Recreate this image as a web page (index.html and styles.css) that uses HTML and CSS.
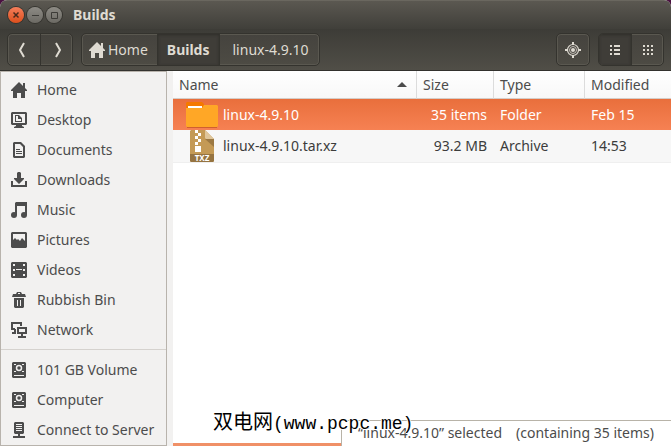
FILE: index.html
```html
<!DOCTYPE html>
<html lang="en">
<head>
    <meta charset="UTF-8">
    <meta name="viewport" content="width=device-width, initial-scale=1.0">
    <title>Builds</title>
    <link rel="stylesheet" href="styles.css">
</head>
<body>
    <div class="window">
        <header class="titlebar">
            <button class="win-btn close" aria-label="Close">
                <svg width="16" height="16" viewBox="0 0 16 16"><path d="M5.5 5.5l5 5M10.5 5.5l-5 5" stroke="#4a2a1c" stroke-width="1.5"/></svg>
            </button>
            <button class="win-btn" aria-label="Minimize">
                <svg width="16" height="16" viewBox="0 0 16 16"><path d="M5 8.5h7" stroke="#3c3b37"/></svg>
            </button>
            <button class="win-btn" aria-label="Maximize">
                <svg width="16" height="16" viewBox="0 0 16 16"><path d="M5.500 5.500h6v6h-6z" fill="none" stroke="#3c3b37"/></svg>
            </button>
            <h1>Builds</h1>
        </header>

        <nav class="toolbar">
            <div class="group">
                <button class="tool" aria-label="Back">
                    <svg width="16" height="16" viewBox="0 0 16 16"><path d="M8 1L4 8l4 7" fill="none" stroke="#dfdbd2" stroke-width="2"/></svg>
                </button>
                <button class="tool" aria-label="Forward">
                    <svg width="16" height="16" viewBox="0 0 16 16"><path d="M7 1l4 7-4 7" fill="none" stroke="#dfdbd2" stroke-width="2"/></svg>
                </button>
            </div>
            <div class="group path">
                <button class="tool home">
                    <svg width="16" height="16" viewBox="0 0 16 16" fill="#dfdbd2"><path d="M8 0L0 8v1h2v7h4v-5h4v5h4V9h2V8l-2-2V1h-2v3z"/></svg>
                    Home
                </button>
                <button class="tool active current">Builds</button>
                <button class="tool">linux-4.9.10</button>
            </div>
            <div class="group right">
                <button class="tool" aria-label="Location">
                    <svg width="16" height="16" viewBox="0 0 16 16" fill="none" stroke="#dfdbd2"><circle cx="8" cy="8" r="5.500" stroke-width="1.200"/><circle cx="8" cy="8" r="3.500" stroke-width=".8"/><circle cx="8" cy="8" r="2" fill="#dfdbd2" stroke="none"/><path d="M8 0v3M8 13v3M0 8h3M13 8h3" stroke-width="2"/></svg>
                </button>
            </div>
            <div class="group">
                <button class="tool active" aria-label="List view">
                    <svg width="16" height="16" viewBox="0 0 16 16" fill="#dfdbd2"><path d="M3 3h2v2H3zM3 7h2v2H3zM3 11h2v2H3zM7 3h6v2H7zM7 7h6v2H7zM7 11h6v2H7z"/></svg>
                </button>
                <button class="tool" aria-label="Grid view">
                    <svg width="16" height="16" viewBox="0 0 16 16" fill="#dfdbd2"><path d="M3 3h2v2H3zM3 7h2v2H3zM3 11h2v2H3zM7 3h2v2H7zM7 7h2v2H7zM7 11h2v2H7zM11 3h2v2h-2zM11 7h2v2h-2zM11 11h2v2h-2z"/></svg>
                </button>
            </div>
        </nav>

        <div class="content">
            <!-- Places sidebar -->
            <aside class="sidebar">
                <ul>
                    <li><a href="#">
                        <svg width="16" height="16" viewBox="0 0 16 16"><path d="M8 0L0 8v1h2v7h4v-5h4v5h4V9h2V8l-2-2V1h-2v3z"/></svg>
                        Home</a></li>
                    <li><a href="#">
                        <svg width="16" height="16" viewBox="0 0 16 16"><path fill-rule="evenodd" d="M1 0h14l1 1v11l-1 1h-4v1l2 1v1H3v-1l2-1v-1H1l-1-1V1zM2 2v9h12V2zM4 3h4l3 3v4H4zM5 4v5h5V7H7V4z"/></svg>
                        Desktop</a></li>
                    <li><a href="#">
                        <svg width="16" height="16" viewBox="0 0 16 16"><path fill-rule="evenodd" d="M3 0h7l4 4v11l-1 1H3l-1-1V1zM4 2v12h8V5L9 2zM5 7h4v1H5zM5 9h6v1H5zM5 11h6v1H5z"/></svg>
                        Documents</a></li>
                    <li><a href="#">
                        <svg width="16" height="16" viewBox="0 0 16 16"><path d="M6 1l1-1h2l1 1v5h3v1l-5 5-5-5V6h3zM0 9h2v4h12V9h2v6H0z"/></svg>
                        Downloads</a></li>
                    <li><a href="#">
                        <svg width="16" height="16" viewBox="0 0 16 16"><path d="M4 1l1-1h11v13h-2V4H6v9H4z"/><circle cx="3" cy="13" r="3"/><circle cx="13" cy="13" r="3"/></svg>
                        Music</a></li>
                    <li><a href="#">
                        <svg width="16" height="16" viewBox="0 0 16 16"><path fill-rule="evenodd" d="M1 0h14l1 1v14l-1 1H1l-1-1V1zM2 2v6l2-2 2 2 1-1 2 2 2-3 3 3V2z"/></svg>
                        Pictures</a></li>
                    <li><a href="#">
                        <svg width="16" height="16" viewBox="0 0 16 16"><path fill-rule="evenodd" d="M1 0h14l1 1v14l-1 1H1l-1-1V1zM2 2v2h2V2zM2 7v2h2V7zM2 12v2h2v-2zM12 2v2h2V2zM12 7v2h2V7zM12 12v2h2v-2zM5 7v1h6V7z"/></svg>
                        Videos</a></li>
                    <li><a href="#">
                        <svg width="16" height="16" viewBox="0 0 16 16"><path fill-rule="evenodd" d="M5 2l1-2h4l1 2h3l1 3H1l1-3zM7 1v1h2V1zM3 6h10v9l-1 1H4l-1-1zM6 8v6h1V8zM9 8v6h1V8z"/></svg>
                        Rubbish Bin</a></li>
                    <li><a href="#">
                        <svg class="outline" width="16" height="16" viewBox="0 0 16 16"><path d="M10 4V1H1v6h3M5 11H1M4 7v4M7 6h8v5H7zM11 11v4M7 15h8"/></svg>
                        Network</a></li>
                </ul>
                <ul class="devices">
                    <li><a href="#">
                        <svg width="16" height="16" viewBox="0 0 16 16"><path fill-rule="evenodd" d="M2 0h12l1 1v14l-1 1H2l-1-1V1zM3 13v1h10v-1z"/><circle cx="8" cy="6" r="2.500" fill="none" stroke="#f2f1f0" stroke-width="1.500"/><path d="M3 2h2v1H3zM11 2h2v1h-2zM3 9h2v1H3zM11 9h2v1h-2z" fill="#f2f1f0"/></svg>
                        101 GB Volume</a></li>
                    <li><a href="#">
                        <svg width="16" height="16" viewBox="0 0 16 16"><path fill-rule="evenodd" d="M2 0h12l1 1v14l-1 1H2l-1-1V1zM3 13v1h10v-1z"/><circle cx="8" cy="6" r="2.500" fill="none" stroke="#f2f1f0" stroke-width="1.500"/><path d="M3 2h2v1H3zM11 2h2v1h-2zM3 9h2v1H3zM11 9h2v1h-2z" fill="#f2f1f0"/></svg>
                        Computer</a></li>
                    <li><a href="#">
                        <svg width="16" height="16" viewBox="0 0 16 16"><path fill-rule="evenodd" d="M4 0h8l1 1v10l-1 1H9v2h5v2H2v-2h5v-2H4l-1-1V1zM5 2v1h6V2zM5 4v1h6V4zM5 6v1h6V6zM5 8v1h6V8z"/></svg>
                        Connect to Server</a></li>
                </ul>
            </aside>

            <!-- File list -->
            <main class="files">
                <table>
                    <thead>
                        <tr>
                            <th><div class="sorted">Name <svg width="10" height="5" viewBox="0 0 10 5"><path d="M0 5L5 0l5 5z"/></svg></div></th>
                            <th class="size">Size</th>
                            <th class="type">Type</th>
                            <th class="modified">Modified</th>
                        </tr>
                    </thead>
                    <tbody>
                        <tr class="selected">
                            <td><div class="file">
                                <svg width="32" height="27" viewBox="0 0 32 27"><path d="M1 1h15l2 2v7H0V2z" fill="#f57900"/><path d="M2 5h14v3H2z" fill="#fff"/><path d="M0 7h16l2-3h13l1 1v20l-1 1H1l-1-1z" fill="#ffa726"/><path d="M1 26h30v1H1z" fill="#d0602f"/></svg>
                                linux-4.9.10</div></td>
                            <td class="num">35 items</td>
                            <td>Folder</td>
                            <td>Feb 15</td>
                        </tr>
                        <tr class="odd">
                            <td><div class="file">
                                <svg width="32" height="32" viewBox="0 0 32 32"><path d="M5 0h14l9 9v22l-1 1H5l-1-1V1z" fill="#c49a56"/><path d="M19 9l9 8V9z" fill="#9c7943"/><path d="M19 0l9 9h-8l-1-1z" fill="#dfc69b"/><path d="M4 24h24v7l-1 1H5l-1-1z" fill="#967441"/><path d="M9 0h3v3H9zM12 3h3v3h-3zM9 6h3v3H9zM12 9h3v3h-3zM9 12h3v3H9zM9 16h6v6H9z" fill="#fff"/><text x="16" y="31" class="ext">TXZ</text></svg>
                                linux-4.9.10.tar.xz</div></td>
                            <td class="num">93.2 MB</td>
                            <td>Archive</td>
                            <td>14:53</td>
                        </tr>
                    </tbody>
                </table>
                <div class="progress"></div>
                <div class="status"><span>“linux-4.9.10” selected</span><span>(containing 35 items)</span></div>
                <div class="watermark"><span>双电网</span>(www.pcpc.me)</div>
            </main>
        </div>
    </div>
</body>
</html>
```

FILE: styles.css
```css
* {
    box-sizing: border-box;
}
body {
    margin: 0;
    background-color: #4a1140;
    color: #4c4c4c;
    font-family: "Noto Sans", "Open Sans", sans-serif;
    font-size: 14px;
    line-height: 20px;
}
button {
    font: inherit;
    color: inherit;
    padding: 0;
    border: none;
    background: none;
}
svg {
    display: block;
    flex: none;
}
.window {
    display: flex;
    flex-direction: column;
    height: 100vh;
    overflow: hidden;
    border-radius: 7px 7px 0 0;
    background-color: #f2f1f0;
}

/* Title bar */
.titlebar {
    display: flex;
    align-items: center;
    gap: 3px;
    height: 29px;
    padding: 0 8px;
    background: linear-gradient(#5b5851, #403f3a);
    border-top: 1px solid #6a675f;
}
.titlebar h1 {
    margin: 0 0 0 8px;
    font-size: 14px;
    color: #dfdbd2;
}
.win-btn {
    width: 16px;
    height: 16px;
    border-radius: 50%;
    background: linear-gradient(#8d8b85, #6c6a64);
    box-shadow: 0 0 0 1px #35342f;
}
.win-btn.close {
    background: linear-gradient(#f57e5b, #dd4f1c);
}

/* Toolbar */
.toolbar {
    display: flex;
    gap: 8px;
    height: 42px;
    padding: 4px 7px;
    background: linear-gradient(#3d3c37, #504e47);
    border-bottom: 1px solid #33322e;
    color: #dfdbd2;
}
.group {
    display: flex;
    height: 33px;
    border: 1px solid #34332e;
    border-radius: 5px;
    box-shadow: inset 0 0 0 1px #5a5850;
    background: linear-gradient(#45433e, #4d4b44);
    overflow: hidden;
}
.tool {
    display: flex;
    align-items: center;
    justify-content: center;
    gap: 3px;
    min-width: 32px;
}
.tool + .tool {
    border-left: 1px solid #34332e;
}
.tool.active {
    background-color: #3f3d38;
    box-shadow: inset 0 1px 3px #2f2e2a;
}
.path .tool {
    padding: 0 11px 0 13px;
}
.path .home {
    padding: 0 9px 0 7px;
}
.path .current {
    padding: 0 9px;
    font-weight: bold;
}
.right {
    margin-left: auto;
}

/* Sidebar */
.content {
    display: flex;
    flex: 1;
    min-height: 0;
}
.sidebar {
    width: 167px;
    margin-right: 6px;
    padding-top: 3px;
    border: 1px solid #b8b3ac;
    overflow: hidden;
    flex: none;
}
.sidebar ul {
    margin: 0;
    padding: 0;
    list-style: none;
}
.sidebar .devices {
    margin-top: 4px;
    padding-top: 5px;
    border-top: 1px solid #d5d2ce;
}
.sidebar a {
    display: flex;
    align-items: center;
    gap: 10px;
    height: 30px;
    padding-left: 10px;
    color: #4c4c4c;
    white-space: nowrap;
    text-decoration: none;
}
.sidebar svg {
    fill: #4c4c4c;
}
.sidebar .outline {
    fill: none;
    stroke: #4c4c4c;
    stroke-width: 2;
}

/* File list */
.files {
    position: relative;
    flex: 1;
    min-width: 0;
    background-color: #fff;
}
table {
    width: 100%;
    border-collapse: separate;
    border-spacing: 0;
    table-layout: fixed;
}
th {
    height: 28px;
    padding: 0 6px;
    font-weight: normal;
    text-align: left;
    background: linear-gradient(#fff, #f8f8f8);
    border-bottom: 1px solid #d5cdc8;
}
th + th {
    border-left: 1px solid #dcdcdc;
}
.sorted {
    display: flex;
    align-items: center;
    justify-content: space-between;
    padding-right: 3px;
}
.sorted svg {
    fill: #4c4c4c;
}
.size {
    width: 77px;
}
.type {
    width: 91px;
}
.modified {
    width: 87px;
}
td {
    height: 31px;
    padding: 0 6px 0 7px;
    color: #3c3c3c;
    white-space: nowrap;
}
td:first-child {
    padding-left: 13px;
}
.num {
    text-align: right;
}
.file {
    display: flex;
    align-items: center;
    gap: 5px;
}
.selected td {
    color: #fff;
    background: linear-gradient(#e96f3c, #f68153);
}
.odd td {
    height: 33px;
    background-color: #f7f7f7;
    border-bottom: 1px solid #efefef;
}
.ext {
    fill: #fff;
    font-size: 8px;
    font-weight: bold;
    text-anchor: middle;
}

/* Overlays at the bottom of the list */
.progress {
    position: absolute;
    left: 0;
    right: 0;
    bottom: 0;
    height: 3px;
    background-color: #f09067;
}
.status {
    position: absolute;
    right: 0;
    bottom: 0;
    display: flex;
    gap: 14px;
    height: 26px;
    padding: 2px 17px 0 16px;
    background-color: #fff;
    border: 1px solid #b8b3a8;
    border-width: 1px 0 0 1px;
    white-space: nowrap;
}
.watermark {
    position: absolute;
    left: 40px;
    bottom: 10px;
    color: #000;
    font-family: "Liberation Mono", "Noto Sans CJK SC", monospace;
    font-size: 18px;
    line-height: 24px;
    text-shadow: 1px 0 #fff, -1px 0 #fff, 0 1px #fff, 0 -1px #fff;
    white-space: nowrap;
}
.watermark span {
    font-size: 20px;
}
```
